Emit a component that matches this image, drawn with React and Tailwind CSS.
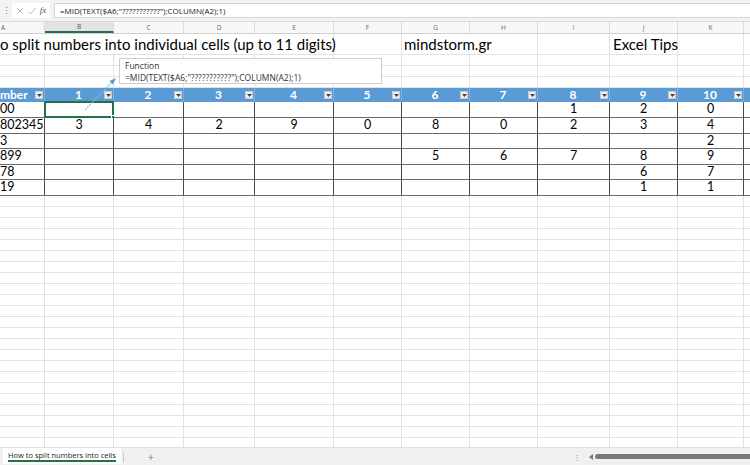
import React from "react";

const W = [45, 69, 70, 71, 79, 68, 68, 68, 72, 68, 66, 80];
const LETTERS = ["A", "B", "C", "D", "E", "F", "G", "H", "I", "J", "K", ""];
const HEAD = ["mber", "1", "2", "3", "4", "5", "6", "7", "8", "9", "10", ""];
const DATA = [
  { a: "00", v: ["", "", "", "", "", "", "", "1", "2", "0", ""], h: 16 },
  { a: "802345", v: ["3", "4", "2", "9", "0", "8", "0", "2", "3", "4", ""], h: 16 },
  { a: "3", v: ["", "", "", "", "", "", "", "", "", "2", ""], h: 15 },
  { a: "899", v: ["", "", "", "", "", "5", "6", "7", "8", "9", ""], h: 16 },
  { a: "78", v: ["", "", "", "", "", "", "", "", "6", "7", ""], h: 15 },
  { a: "19", v: ["", "", "", "", "", "", "", "", "1", "1", ""], h: 16 },
];

function Caret() {
  return (
    <span className="w-[8px] h-[8px] bg-[#f0f0f0] border border-[#c8c8c8] flex items-center justify-center shrink-0">
      <svg width="5" height="3" viewBox="0 0 5 3">
        <path d="M0 0 L5 0 L2.5 3 Z" fill="#444" />
      </svg>
    </span>
  );
}

function EmptyRow({ h = 11 }) {
  return (
    <div className="flex shrink-0" style={{ height: h }}>
      {W.map((w, i) => (
        <div key={i} className="shrink-0 border-r border-b border-[#e2e2e2]" style={{ width: w }} />
      ))}
    </div>
  );
}

export default function App() {
  return (
    <div
      className="w-[750px] h-[465px] overflow-hidden flex flex-col bg-white relative text-[#000]"
      style={{ fontFamily: "Lato, 'Open Sans', sans-serif" }}
    >
      {/* formula bar */}
      <div className="h-[22px] shrink-0 bg-[#f3f3f3] flex items-center border-b border-[#dadada]">
        <span className="w-[12px] text-center text-[9px] text-[#777] leading-none">⋮</span>
        <div className="h-[15px] w-[38px] bg-white flex items-center justify-around px-[2px] text-[#b0b0b0]">
          <svg width="8" height="8" viewBox="0 0 8 8">
            <path d="M1 1 L7 7 M7 1 L1 7" stroke="#b8b8b8" strokeWidth="0.9" />
          </svg>
          <svg width="9" height="8" viewBox="0 0 9 8">
            <path d="M1 4.5 L3.5 7 L8.5 1" stroke="#b8b8b8" strokeWidth="0.9" fill="none" />
          </svg>
          <span className="text-[9px] italic text-[#555] leading-none" style={{ fontFamily: "'Liberation Serif', serif" }}>
            fx
          </span>
        </div>
        <div
          className="ml-[4px] h-[15px] flex-1 bg-white border border-[#d4d4d4] border-r-0 flex items-center pl-[5px] text-[8px] text-[#222]"
          style={{ fontFamily: "'Open Sans', sans-serif" }}
        >
          =MID(TEXT($A6;"???????????");COLUMN(A2);1)
        </div>
      </div>

      {/* column letters */}
      <div className="h-[12px] shrink-0 flex bg-[#f8f8f8] border-b border-[#d0d0d0]">
        {W.map((w, i) => (
          <div
            key={i}
            className={
              "shrink-0 border-r border-[#dcdcdc] flex items-center text-[6.5px] text-[#666] " +
              (i === 0 ? "justify-start" : "justify-center") +
              (i === 1 ? " bg-[#e3e3e3] border-b-2 border-b-[#217346] text-[#217346]" : "")
            }
            style={{ width: w, fontFamily: "'Open Sans', sans-serif" }}
          >
            {i === 0 ? <span className="ml-[1px]">A</span> : LETTERS[i]}
          </div>
        ))}
      </div>

      {/* grid */}
      <div className="flex-1 overflow-hidden relative flex flex-col">
        {/* title row */}
        <div className="flex h-[21px] shrink-0 text-[15px] leading-none">
          <div className="w-[334px] shrink-0 border-r border-b border-[#e2e2e2] flex items-end pb-[2px] whitespace-nowrap">
            o split numbers into individual cells (up to 11 digits)
          </div>
          <div className="w-[68px] shrink-0 border-r border-b border-[#e2e2e2]" />
          <div className="w-[136px] shrink-0 border-r border-b border-[#e2e2e2] flex items-end pb-[2px] pl-[2px] whitespace-nowrap">
            mindstorm.gr
          </div>
          <div className="w-[72px] shrink-0 border-r border-b border-[#e2e2e2]" />
          <div className="w-[68px] shrink-0 border-r border-b border-[#e2e2e2] flex items-end pb-[2px] pl-[3px] whitespace-nowrap">
            Excel Tips
          </div>
          <div className="w-[66px] shrink-0 border-r border-b border-[#e2e2e2]" />
          <div className="w-[80px] shrink-0 border-r border-b border-[#e2e2e2]" />
        </div>
        <EmptyRow />
        <EmptyRow />
        <EmptyRow />

        {/* table header */}
        <div className="flex h-[14px] shrink-0 bg-[#5b9bd5] text-white font-bold text-[12px] leading-none">
          {W.map((w, i) => (
            <div
              key={i}
              className="shrink-0 flex items-center pr-[1px] border-r border-[#7fb0de]"
              style={{ width: w }}
            >
              <span className={"flex-1 " + (i === 0 ? "text-left" : "text-center pl-[8px]")}>{HEAD[i]}</span>
              {i < 11 && <Caret />}
            </div>
          ))}
        </div>

        {/* data rows */}
        {DATA.map((r, ri) => (
          <div key={ri} className="flex shrink-0 text-[12.5px] leading-none" style={{ height: r.h }}>
            <div className="w-[45px] shrink-0 border-r border-b border-r-[#4a4a4a] border-b-[#6a6a6a] flex items-center whitespace-nowrap overflow-hidden">
              {r.a}
            </div>
            {r.v.map((v, ci) => (
              <div
                key={ci}
                className="shrink-0 border-r border-b border-r-[#4a4a4a] border-b-[#6a6a6a] flex items-center justify-center relative"
                style={{ width: W[ci + 1] }}
              >
                {v}
                {ri === 0 && ci === 0 && (
                  <div className="absolute -left-[1px] -top-[1px] -right-[1px] -bottom-[1px] border-2 border-[#217346]">
                    <div className="absolute -right-[3px] -bottom-[3px] w-[4px] h-[4px] bg-[#217346] border border-white" />
                  </div>
                )}
              </div>
            ))}
          </div>
        ))}

        {Array.from({ length: 24 }).map((_, i) => (
          <EmptyRow key={i} />
        ))}

        {/* callout */}
        <div
          className="absolute left-[119px] top-[24px] w-[263px] h-[26px] bg-white border border-[#cfcfcf] px-[5px] pt-[1px] text-[8.5px] leading-[11.5px] text-[#333]"
          style={{ fontFamily: "'Open Sans', sans-serif" }}
        >
          <div>Function</div>
          <div>=MID(TEXT($A6;"???????????");COLUMN(A2);1)</div>
        </div>
        <svg className="absolute left-[80px] top-[40px]" width="42" height="40" viewBox="0 0 42 40">
          <path d="M5 36 L33 7" stroke="#8fbbe6" strokeWidth="1.2" strokeDasharray="2 1" fill="none" />
          <path d="M36 4 L29.5 7 L33 10.5 Z" fill="#5b9bd5" />
        </svg>
      </div>

      {/* sheet tab bar */}
      <div
        className="h-[18px] shrink-0 bg-[#f0f0f0] border-t border-[#e0e0e0] flex items-center text-[7.5px]"
        style={{ fontFamily: "'Open Sans', sans-serif" }}
      >
        <div className="ml-[3px] h-[16px] self-start bg-white px-[5px] flex flex-col justify-center text-[#222]">
          <span className="leading-[10px] border-b-2 border-[#217346]">How to split numbers into cells</span>
        </div>
        <div className="w-[1px] h-[10px] bg-[#c8c8c8] ml-[2px]" />
        <span className="ml-[24px] text-[11px] text-[#777] leading-none">+</span>
        <div className="flex-1" />
        <span className="text-[8px] text-[#888] leading-none mr-[8px]">⋮</span>
        <svg width="5" height="6" viewBox="0 0 5 6" className="mr-[1px]">
          <path d="M4 0 L0 3 L4 6 Z" fill="#777" />
        </svg>
        <div className="w-[155px] h-[5px] bg-[#7a7a7a] rounded-l-full" />
      </div>
    </div>
  );
}
